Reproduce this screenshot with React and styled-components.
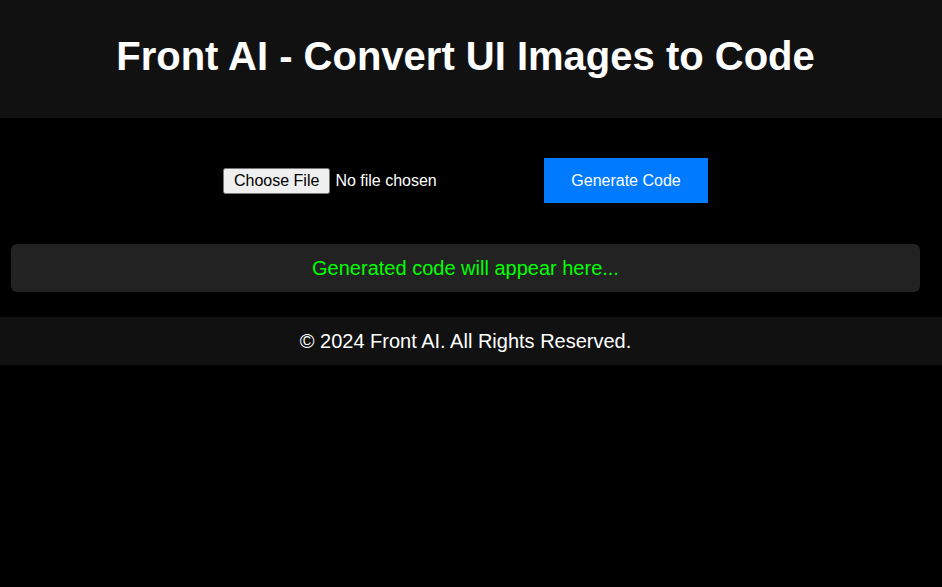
import React from 'react';
import styled, { createGlobalStyle } from 'styled-components';

const GlobalStyle = createGlobalStyle`
  html, body {
    margin: 0;
    padding: 0;
    background: #000;
    color: #fff;
    font-family: "Liberation Sans", Arial, sans-serif;
  }
`;

const Header = styled.header`
  background: #111;
  height: 118px;
  display: flex;
  align-items: center;
  justify-content: center;
  padding: 0 11px 6px 0;
  box-sizing: border-box;
`;

const Title = styled.h1`
  margin: 0;
  font-size: 40px;
  font-weight: bold;
  color: #fff;
`;

const Main = styled.main`
  padding: 40px 22px 25px 11px;
`;

const Controls = styled.div`
  display: flex;
  justify-content: center;
  align-items: center;
  gap: 71px;
  margin-bottom: 41px;
`;

const FileInput = styled.input`
  width: 250px;
  color: #fff;
  font-family: "Liberation Sans", Arial, sans-serif;
  font-size: 16px;

  &::file-selector-button {
    font-family: "Liberation Sans", Arial, sans-serif;
    font-size: 16px;
    padding: 2px 9px;
    margin-right: 5px;
  }
`;

const Button = styled.button`
  background: #007bff;
  color: #fff;
  border: none;
  width: 164px;
  height: 45px;
  font-family: "Liberation Sans", Arial, sans-serif;
  font-size: 16px;
  cursor: pointer;
`;

const Output = styled.div`
  background: #222;
  border-radius: 6px;
  height: 48px;
  display: flex;
  align-items: center;
  justify-content: center;
  color: #0f0;
  font-size: 20px;
`;

const Footer = styled.footer`
  background: #111;
  height: 48px;
  display: flex;
  align-items: center;
  justify-content: center;
  padding-right: 11px;
  font-size: 20px;
`;

export default function App() {
  return (
    <>
      <GlobalStyle />
      <Header>
        <Title>Front AI - Convert UI Images to Code</Title>
      </Header>
      <Main>
        <Controls>
          <FileInput type="file" accept="image/*" />
          <Button>Generate Code</Button>
        </Controls>
        <Output>Generated code will appear here...</Output>
      </Main>
      <Footer>© 2024 Front AI. All Rights Reserved.</Footer>
    </>
  );
}
